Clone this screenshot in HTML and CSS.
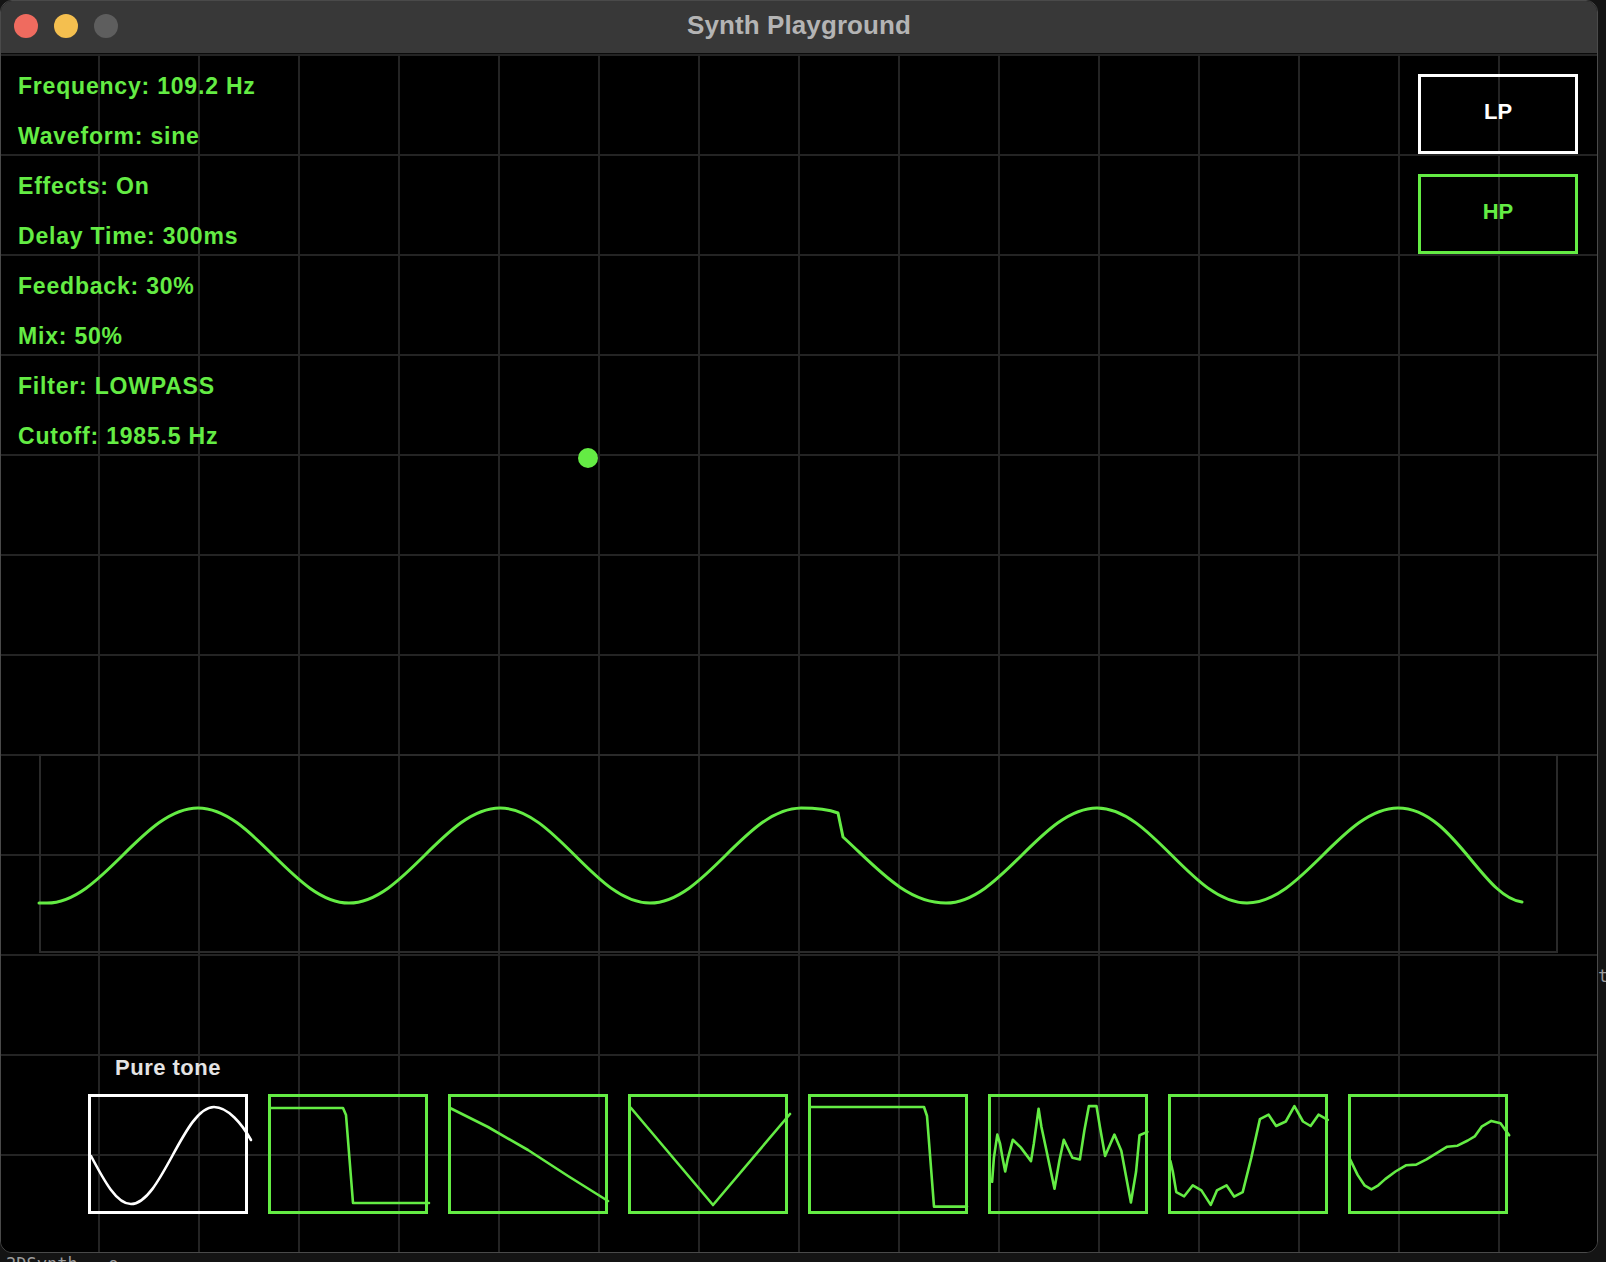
FILE: index.html
```html
<!DOCTYPE html>
<html>
<head>
<meta charset="utf-8">
<title>Synth Playground</title>
<link rel="stylesheet" href="styles.css">
</head>
<body>
<div class="desk">
  <span class="bg-text bg-right">ti</span>
  <span class="bg-text bg-bottom">2DSynth · o</span>
  <div class="window">
    <div class="titlebar">
      <div class="lights">
        <span class="light red"></span>
        <span class="light yellow"></span>
        <span class="light grey"></span>
      </div>
      <div class="title">Synth Playground</div>
      <div></div>
    </div>
    <div class="canvas">
      <div class="top">
        <div class="params">
          <div class="param">Frequency: 109.2 Hz</div>
          <div class="param">Waveform: sine</div>
          <div class="param">Effects: On</div>
          <div class="param">Delay Time: 300ms</div>
          <div class="param">Feedback: 30%</div>
          <div class="param">Mix: 50%</div>
          <div class="param">Filter: LOWPASS</div>
          <div class="param">Cutoff: 1985.5 Hz</div>
        </div>
        <div class="filters">
          <div class="fbtn active">LP</div>
          <div class="fbtn">HP</div>
        </div>
      </div>
      <div class="dot"></div>
      <svg class="scope" width="1519" height="200" viewBox="39 754 1519 200">
        <rect x="40" y="755" width="1517" height="197" class="scope-frame"/>
        <path class="wave" d="M39,903 L47,903 C102,903 143,808 198,808 C253,808 294,903 349,903 C404,903 445,808 500,808 C555,808 595,903 650,903 C705,903 746,808 801,808 C815,808 830,810 838,813 L843,837 C877,868 906,903 946,903 C1001,903 1042,808 1097,808 C1152,808 1192,903 1247,903 C1302,903 1343,808 1398,808 C1453,808 1482,897 1522,902"/>
      </svg>
      <div class="presets">
        <div class="preset">
          <div class="preset-label">Pure tone</div>
          <svg class="thumb selected" width="160" height="120" viewBox="0 0 160 120">
            <rect x="1.5" y="1.5" width="157" height="117"/>
            <path d="M3,62 C16.4,87.2 28.6,110 43,110 C73.2,110 95.8,13 126,13 C140,13 154,30 163,46"/>
          </svg>
        </div>
        <div class="preset">
          <div class="preset-label"></div>
          <svg class="thumb" width="160" height="120" viewBox="0 0 160 120">
            <rect x="1.5" y="1.5" width="157" height="117"/>
            <path d="M2,14 L75,14 L78,21 L85,109 L161,109"/>
          </svg>
        </div>
        <div class="preset">
          <div class="preset-label"></div>
          <svg class="thumb" width="160" height="120" viewBox="0 0 160 120">
            <rect x="1.5" y="1.5" width="157" height="117"/>
            <path d="M2,14 L40,33 L80,56 L120,82 L160,107"/>
          </svg>
        </div>
        <div class="preset">
          <div class="preset-label"></div>
          <svg class="thumb" width="160" height="120" viewBox="0 0 160 120">
            <rect x="1.5" y="1.5" width="157" height="117"/>
            <path d="M3,14 L85,111 L162,20"/>
          </svg>
        </div>
        <div class="preset">
          <div class="preset-label"></div>
          <svg class="thumb" width="160" height="120" viewBox="0 0 160 120">
            <rect x="1.5" y="1.5" width="157" height="117"/>
            <path d="M2,13 L116,13 L119,22 L126,112.6 L159,112.6"/>
          </svg>
        </div>
        <div class="preset">
          <div class="preset-label"></div>
          <svg class="thumb" width="160" height="120" viewBox="0 0 160 120">
            <rect x="1.5" y="1.5" width="157" height="117"/>
            <polyline points="4.1,87.8 5.9,63.7 9.3,40.6 12.1,49.9 14.5,63.7 17.2,77.5 19.6,65.4 24.8,45.8 32.7,53.4 43,67.1 45.8,49.9 50.6,14.8 53.4,32.7 58.5,56.8 66.5,94.7 71.3,67.1 75.8,45.8 84.4,63.7 91.9,65.4 96.4,36.2 100.9,12.1 108.5,12.1 111.9,32.7 117.1,62 126.4,40.6 133.3,56.8 142.9,108.5 148.1,77.5 151.5,41.3 159.4,37.9"/>
          </svg>
        </div>
        <div class="preset">
          <div class="preset-label"></div>
          <svg class="thumb" width="160" height="120" viewBox="0 0 160 120">
            <rect x="1.5" y="1.5" width="157" height="117"/>
            <polyline points="2.4,67.1 4.8,77.5 8.3,98.1 16.2,102.3 24.8,91.3 33.4,96.4 42.7,110.9 48.9,96.4 58.5,91.3 66.1,102.6 74.7,98.1 83.3,63.7 91.9,25.1 100.6,20.7 108.1,32 117.8,27.5 126.4,12.1 135,27.5 142.6,32 150.5,20.7 159.8,25.8"/>
          </svg>
        </div>
        <div class="preset">
          <div class="preset-label"></div>
          <svg class="thumb" width="160" height="120" viewBox="0 0 160 120">
            <rect x="1.5" y="1.5" width="157" height="117"/>
            <polyline points="2.1,65.4 9.6,80.9 16.5,91.3 23.4,95.4 30.3,91.3 37.2,85.1 47.5,77.5 57.9,71.3 68.2,70.6 78.5,65.4 92.3,56.8 99.2,52.7 109.5,51.7 119.8,46.5 126.7,42.4 133.6,32.7 143.3,26.9 152.5,29.3 161.2,41.3"/>
          </svg>
        </div>
      </div>
    </div>
  </div>
</div>
</body>
</html>
```

FILE: styles.css
```css
* { box-sizing: border-box; }

html, body {
  margin: 0;
  padding: 0;
  background: #141414;
  font-family: "Liberation Sans", Arial, sans-serif;
}

.desk {
  position: relative;
  width: 1606px;
  height: 1262px;
  overflow: hidden;
  background: #141414;
}

.bg-text {
  position: absolute;
  color: #9c9c9c;
  font-size: 17px;
  font-family: "DejaVu Sans Mono", monospace;
  white-space: nowrap;
}
.bg-right { left: 1598px; top: 966px; }
.bg-bottom { left: 6px; top: 1254px; }

.window {
  position: relative;
  width: 1598px;
  height: 1253px;
  border: 1px solid #4a4a4a;
  border-radius: 12px;
  overflow: hidden;
  display: flex;
  flex-direction: column;
  background: #000;
}

.titlebar {
  height: 53px;
  flex: none;
  background: #383838;
  border-bottom: 1px solid #0a0a0a;
  display: grid;
  grid-template-columns: 1fr auto 1fr;
  align-items: center;
  padding-bottom: 3px;
}

.lights {
  display: flex;
  gap: 16px;
  padding-left: 13px;
  margin-top: 1px;
}
.light {
  width: 24px;
  height: 24px;
  border-radius: 50%;
  display: block;
}
.light.red { background: #ef6b5f; }
.light.yellow { background: #f4bf4f; }
.light.grey { background: #5e5e5e; }

.title {
  color: #b4b4b4;
  font-weight: bold;
  font-size: 26px;
  letter-spacing: 0.1px;
}

.canvas {
  position: relative;
  flex: 1;
  display: flex;
  flex-direction: column;
  background-color: #000;
  background-image:
    linear-gradient(to right, #242424 2px, transparent 2px),
    linear-gradient(to bottom, #242424 2px, transparent 2px);
  background-size: 100px 100px;
  background-position: -3px 0;
}

.top {
  display: flex;
  justify-content: space-between;
  align-items: flex-start;
}

.params {
  padding: 7px 0 0 17px;
}
.param {
  height: 50px;
  line-height: 50px;
  font-size: 23px;
  font-weight: bold;
  letter-spacing: 0.8px;
  color: #64ec44;
  white-space: nowrap;
}

.filters {
  display: flex;
  flex-direction: column;
  gap: 20px;
  padding: 20px 19px 0 0;
}
.fbtn {
  width: 160px;
  height: 80px;
  border: 3px solid #64ec44;
  color: #64ec44;
  display: flex;
  align-items: center;
  justify-content: center;
  padding-bottom: 5px;
  font-size: 22px;
  font-weight: bold;
}
.fbtn.active {
  border-color: #ffffff;
  color: #ffffff;
}

.dot {
  position: absolute;
  left: 577px;
  top: 394px;
  width: 20px;
  height: 20px;
  border-radius: 50%;
  background: #64ec44;
}

.scope {
  display: block;
  margin: 293px 0 0 38px;
  overflow: visible;
}
.scope-frame {
  fill: none;
  stroke: #2a2a2a;
  stroke-width: 2;
}
.wave {
  fill: none;
  stroke: #64ec44;
  stroke-width: 3;
  stroke-linejoin: round;
  stroke-linecap: round;
}

.presets {
  display: flex;
  gap: 20px;
  margin: 101px 0 0 87px;
}
.preset {
  width: 160px;
  display: flex;
  flex-direction: column;
}
.preset-label {
  height: 26px;
  line-height: 26px;
  margin-bottom: 13px;
  text-align: center;
  color: #e4e4e4;
  font-size: 22px;
  font-weight: bold;
  letter-spacing: 0.5px;
  white-space: nowrap;
}

.thumb {
  display: block;
  overflow: visible;
}
.thumb rect {
  fill: none;
  stroke: #64ec44;
  stroke-width: 3;
}
.thumb path,
.thumb polyline {
  fill: none;
  stroke: #64ec44;
  stroke-width: 2.6;
  stroke-linejoin: round;
  stroke-linecap: round;
}
.thumb.selected rect,
.thumb.selected path {
  stroke: #ffffff;
}
```
